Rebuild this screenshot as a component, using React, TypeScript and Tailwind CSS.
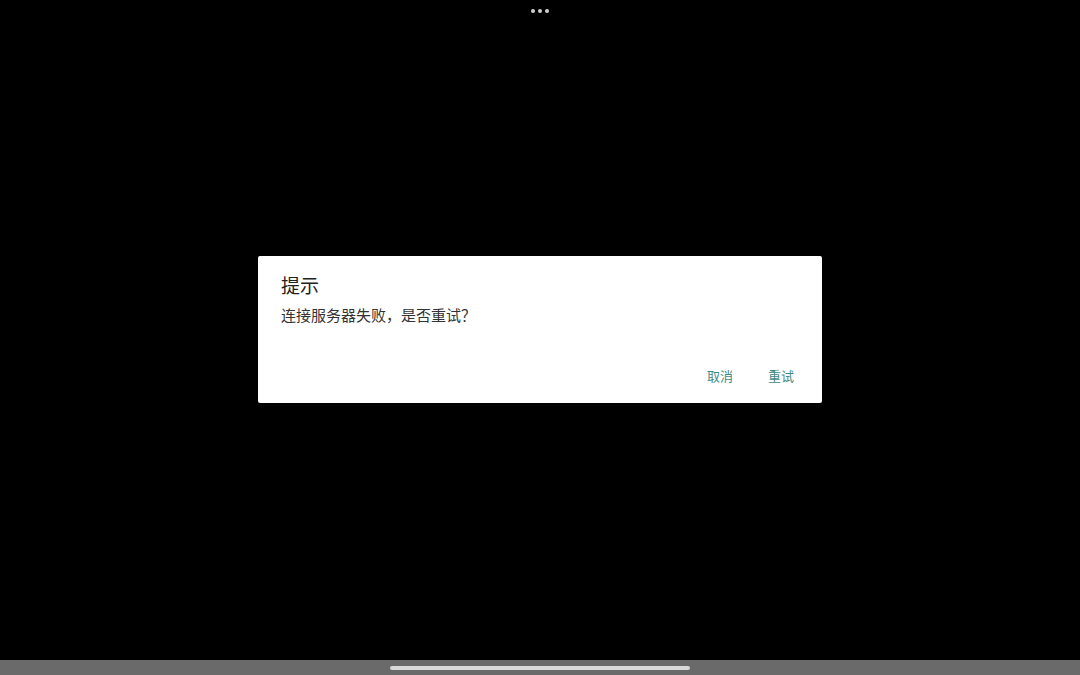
export default function App() {
  const font = { fontFamily: '"Noto Sans CJK SC", "Noto Sans", sans-serif' };
  return (
    <div className="flex h-[675px] w-[1080px] flex-col bg-black" style={font}>
      <div className="flex h-[22px] items-center justify-center gap-[3px]">
        <span className="h-[4px] w-[4px] rounded-full bg-[#d0d0d0]" />
        <span className="h-[4px] w-[4px] rounded-full bg-[#d0d0d0]" />
        <span className="h-[4px] w-[4px] rounded-full bg-[#d0d0d0]" />
      </div>
      <div className="flex flex-1 items-center justify-center pb-[24px]">
        <section className="flex h-[147px] w-[564px] flex-col rounded-[2px] bg-white px-[23px] pt-[17px] pb-[17px]">
          <div className="text-[19px] leading-[24px] text-[#212121]">提示</div>
          <div className="mt-[7px] text-[15px] leading-[22px] text-[#333333]">连接服务器失败，是否重试？</div>
          <div className="mt-auto flex justify-end gap-[35px] pr-[5px]">
            <button type="button" className="text-[13px] leading-[20px] text-[#3f8a85]">取消</button>
            <button type="button" className="text-[13px] leading-[20px] text-[#3f8a85]">重试</button>
          </div>
        </section>
      </div>
      <div className="flex h-[15px] items-center justify-center bg-[#6a6a6a]">
        <div className="h-[4px] w-[300px] rounded-full bg-[#d9d9d9]" />
      </div>
    </div>
  );
}
